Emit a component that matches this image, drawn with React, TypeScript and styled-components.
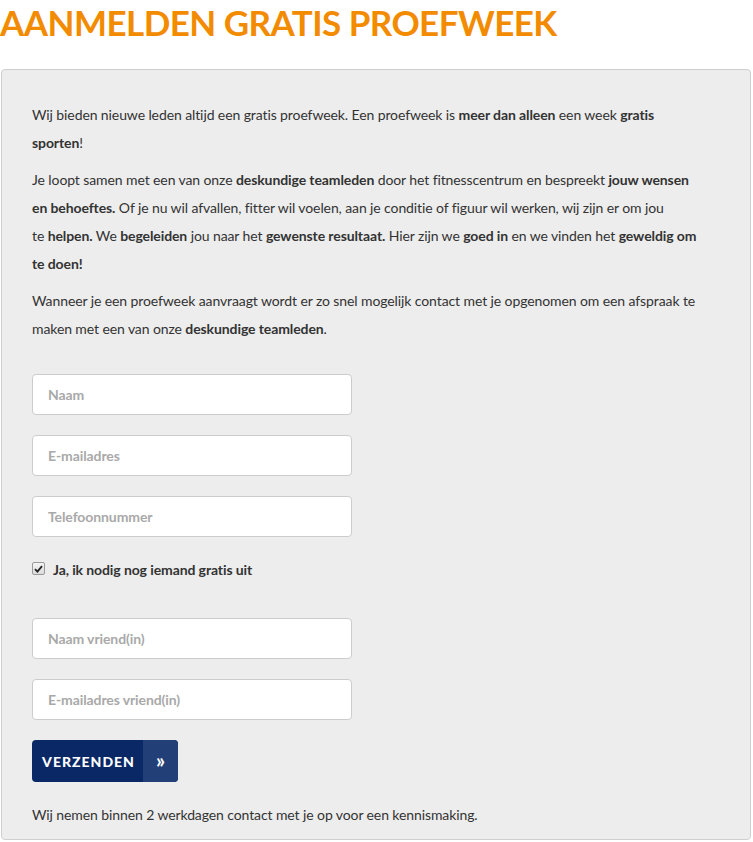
import React from "react";
import styled, { createGlobalStyle } from "styled-components";

const Global = createGlobalStyle`
  html, body { margin: 0; padding: 0; background: #fff; }
  body { font-family: Lato, "Open Sans", sans-serif; color: #333; }
  * { box-sizing: border-box; }
`;

const Page = styled.div`
  width: 753px;
  padding: 0 2px 0 1px;
`;

const Title = styled.h1`
  margin: 0 0 0 -1px;
  padding-top: 1px;
  height: 69px;
  font-family: Lato, sans-serif;
  font-weight: 700;
  font-size: 35px;
  line-height: 42px;
  color: #f38b00;
  letter-spacing: -0.55px;
`;

const Panel = styled.section`
  background: #ededed;
  border: 1px solid #cfcfcf;
  border-radius: 4px;
  padding: 31px 45px 12px 30px;
  height: 771px;
`;

const Para = styled.p`
  margin: 0 0 9px 0;
  font-size: 14px;
  line-height: 28px;
  letter-spacing: -0.1px;
  color: #333;
  b { font-weight: 700; color: #333; }
`;

const Form = styled.form`
  display: flex;
  flex-direction: column;
  margin-top: 31px;
`;

const Field = styled.input`
  width: 320px;
  height: 41px;
  border: 1px solid #cccccc;
  border-radius: 4px;
  background: #fff;
  padding: 0 15px;
  font-family: Lato, sans-serif;
  font-size: 14px;
  font-weight: 700;
  letter-spacing: -0.1px;
  color: #555;
  margin-bottom: 20px;
  outline: none;
  &::placeholder { color: #a9a9a9; opacity: 1; }
`;

const CheckRow = styled.label`
  display: flex;
  align-items: center;
  gap: 8px;
  height: 22px;
  margin: 1px 0 38px 0;
  font-size: 14px;
  font-weight: 700;
  letter-spacing: -0.1px;
  color: #333;
  cursor: pointer;
`;

const CheckBox = styled.span`
  width: 13px;
  height: 13px;
  border: 1px solid #9a9a9a;
  border-radius: 2px;
  background: linear-gradient(#f4f4f4, #dcdcdc);
  display: flex;
  align-items: center;
  justify-content: center;
  margin-bottom: 1px;
`;

const Button = styled.button`
  display: flex;
  align-items: stretch;
  width: 146px;
  height: 42px;
  padding: 0;
  border: none;
  border-radius: 4px;
  overflow: hidden;
  background: #092865;
  cursor: pointer;
  margin-bottom: 19px;
`;

const ButtonLabel = styled.span`
  flex: 1;
  display: flex;
  align-items: center;
  justify-content: center;
  padding-left: 2px;
  color: #fff;
  font-family: Lato, sans-serif;
  font-weight: 900;
  font-size: 14px;
  letter-spacing: 1px;
`;

const ButtonArrow = styled.span`
  width: 35px;
  display: flex;
  align-items: center;
  justify-content: center;
  background: #233f78;
  color: #fff;
  font-family: Lato, sans-serif;
  font-weight: 700;
  font-size: 20px;
  padding-bottom: 2px;
`;

const Note = styled.p`
  margin: 0;
  font-size: 14px;
  line-height: 28px;
  letter-spacing: -0.1px;
  color: #333;
`;

export default function App() {
  return (
    <Page>
      <Global />
      <Title>AANMELDEN GRATIS PROEFWEEK</Title>
      <Panel>
        <Para>
          Wij bieden nieuwe leden altijd een gratis proefweek. Een proefweek is <b>meer dan alleen</b> een week <b>gratis sporten</b>!
        </Para>
        <Para>
          Je loopt samen met een van onze <b>deskundige teamleden</b> door het fitnesscentrum en bespreekt <b>jouw wensen en behoeftes.</b> Of je nu wil afvallen, fitter wil voelen, aan je conditie of figuur wil werken, wij zijn er om jou te{"\u00a0"}<b>helpen.</b> We <b>begeleiden</b> jou naar het <b>gewenste resultaat.</b> Hier zijn we <b>goed in</b> en we vinden het <b>geweldig om te doen!</b>
        </Para>
        <Para>
          Wanneer je een proefweek aanvraagt wordt er zo snel mogelijk contact met je opgenomen om een afspraak te maken met een van onze <b>deskundige teamleden</b>.
        </Para>
        <Form onSubmit={(e) => e.preventDefault()}>
          <Field type="text" placeholder="Naam" />
          <Field type="email" placeholder="E-mailadres" />
          <Field type="tel" placeholder="Telefoonnummer" />
          <CheckRow>
            <CheckBox>
              <svg width="9" height="8" viewBox="0 0 9 8">
                <path d="M1 4.2 L3.4 6.6 L8 1.2" fill="none" stroke="#222" strokeWidth="1.8" />
              </svg>
            </CheckBox>
            Ja, ik nodig nog iemand gratis uit
          </CheckRow>
          <Field type="text" placeholder="Naam vriend(in)" />
          <Field type="email" placeholder="E-mailadres vriend(in)" />
          <Button type="submit">
            <ButtonLabel>VERZENDEN</ButtonLabel>
            <ButtonArrow>»</ButtonArrow>
          </Button>
          <Note>Wij nemen binnen 2 werkdagen contact met je op voor een kennismaking.</Note>
        </Form>
      </Panel>
    </Page>
  );
}
